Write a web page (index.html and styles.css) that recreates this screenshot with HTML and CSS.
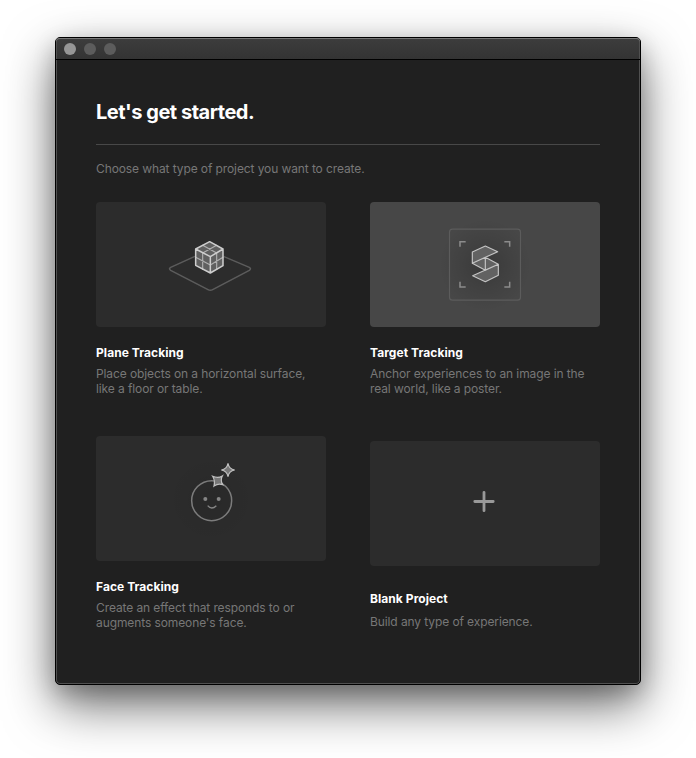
FILE: index.html
```html
<!DOCTYPE html>
<html lang="en">
<head>
<meta charset="utf-8">
<title>Let's get started</title>
<link rel="stylesheet" href="styles.css">
</head>
<body>
<div class="window">
  <header class="titlebar"><span class="dot dot-close"></span><span class="dot"></span><span class="dot"></span></header>
  <main class="content">
    <h1 class="heading">Let's get started.</h1>
    <p class="intro">Choose what type of project you want to create.</p>
    <div class="grid">
      <section class="option">
        <div class="card">
          <svg class="art" viewBox="0 0 230 125" fill="none"><g transform="translate(64 23) scale(.33333)" stroke-linejoin="round" stroke-linecap="round">
            <path d="M103 95L32 127Q25 131 32 136L144 194Q151 198 158 194L268 136Q275 131 268 127L192 95" stroke="#5c5c5c" stroke-width="4.500"/>
            <path d="M149 50L189 72V122L151 144L107 121V72Z" fill="#606060"/>
            <path d="M128 61L170 84V133M170 61L128 84V133M107 97L151 120L189 97" stroke="#b0b0b0" stroke-width="3.500"/>
            <path d="M149 50L189 72V122L151 144L107 121V72ZM107 72L151 95L189 72M151 95V144" stroke="#cecece" stroke-width="4.500"/>
          </g></svg>
        </div>
        <h2 class="name">Plane Tracking</h2>
        <p class="desc">Place objects on a horizontal surface,<br>like a floor or table.</p>
      </section>
      <section class="option">
        <div class="card card-selected">
          <svg class="art" viewBox="0 0 230 125" fill="none">
            <defs><radialGradient id="glow"><stop offset="0" stop-color="#000" stop-opacity=".2"/><stop offset=".5" stop-color="#000" stop-opacity=".09"/><stop offset="1" stop-color="#000" stop-opacity="0"/></radialGradient></defs>
            <circle cx="115" cy="63" r="46" fill="url(#glow)"/>
            <g transform="translate(70 18) scale(.33333)" stroke-linejoin="round">
            <rect x="28.500" y="27.500" width="213" height="213" rx="9" stroke="#5c5c5c" stroke-width="3.500"/>
            <path d="M60 80V65H77M193 65H209V80M60 185V201H77M193 201H209V185" stroke="#8c8c8c" stroke-width="4.500" stroke-linejoin="miter"/>
            <path d="M136 78L173 95L97 130V96ZM136 112V151L97 130ZM136 112L175 133L136 151ZM175 133V166L136 185L98 167Z" fill="#626262" stroke="#c4c4c4" stroke-width="3.500"/>
          </g></svg>
        </div>
        <h2 class="name">Target Tracking</h2>
        <p class="desc">Anchor experiences to an image in the<br>real world, like a poster.</p>
      </section>
      <section class="option">
        <div class="card">
          <svg class="art" viewBox="0 0 230 125" fill="none">
            <circle class="face-shade" cx="115" cy="63" r="44" fill="url(#glow)"/>
            <g transform="translate(74 14) scale(.33333)">
            <circle cx="125" cy="152" r="60" stroke="#7c7c7c" stroke-width="4.500"/>
            <circle cx="106" cy="147" r="6" fill="#858585"/><circle cx="146" cy="147" r="6" fill="#858585"/>
            <path d="M113 167Q125 181 139 167" stroke="#858585" stroke-width="4"/>
            <path d="M174 40Q177 57 194 60Q177 63 174 80Q171 63 154 60Q171 57 174 40Z" fill="#777" stroke="#c0c0c0" stroke-width="3.500"/>
            <path d="M128 79Q144 86 157 78Q150 91 158 104Q145 99 132 108Q136 93 128 79Z" fill="#777" stroke="#c0c0c0" stroke-width="3.500"/>
          </g></svg>
        </div>
        <h2 class="name">Face Tracking</h2>
        <p class="desc">Create an effect that responds to or<br>augments someone's face.</p>
      </section>
      <section class="option option-blank">
        <div class="card">
          <svg class="art" viewBox="0 0 230 125"><path d="M114 51.300V69.700M104.800 60.500H123.200" stroke="#999" stroke-width="2.800" stroke-linecap="round"/></svg>
        </div>
        <h2 class="name">Blank Project</h2>
        <p class="desc">Build any type of experience.</p>
      </section>
    </div>
  </main>
</div>
</body>
</html>
```
FILE: styles.css
```css
* { box-sizing: border-box; }
body { margin: 0; height: 758px; display: flow-root; background: #fff; font-family: Inter, sans-serif; }
.window {
  width: 586px; height: 648px; margin: 37px 0 0 55px;
  border: 1px solid #000; border-radius: 5px; background: #202020;
  box-shadow: inset 0 0 0 1px #505050, 0 20px 50px rgba(0,0,0,.58), 0 8px 22px rgba(0,0,0,.2);
}
.titlebar {
  height: 22px; display: flex; align-items: center; gap: 8px; padding-left: 8px;
  border-bottom: 1px solid #000; border-radius: 4px 4px 0 0;
  background: linear-gradient(#3d3d3d, #333);
  box-shadow: inset 0 1px #777, inset 1px 0 #505050, inset -1px 0 #505050;
}
.dot { width: 12px; height: 12px; border-radius: 50%; background: #5c5c5c; }
.dot-close { background: #969696; }
.content { padding: 38px 40px 0; }
h1, h2, p { margin: 0; }
.heading {
  height: 47px; padding-top: 1px; border-bottom: 1px solid #484848;
  color: #fff; font-size: 20px; line-height: 26px; font-weight: 650; letter-spacing: -.48px;
}
.intro { margin-top: 16px; color: #777; font-size: 12px; line-height: 15px; height: 41px; letter-spacing: -.1px; }
.grid { display: grid; grid-template-columns: 230px 230px; column-gap: 44px; }
.option { height: 234px; }
.card { height: 125px; border-radius: 4px; background: #2c2c2c; }
.card-selected { background: #474747; }
.art { display: block; width: 230px; height: 125px; }
.face-shade { opacity: .4; }
.name { margin-top: 18px; color: #fff; font-size: 12px; line-height: 16px; font-weight: 700; letter-spacing: .06px; }
.desc { margin-top: 5px; color: #777; font-size: 12px; line-height: 15px; white-space: nowrap; letter-spacing: -.1px; }
.option-blank { padding-top: 5px; }
.option-blank .name { margin-top: 25px; }
.option-blank .desc { margin-top: 7px; }
```
